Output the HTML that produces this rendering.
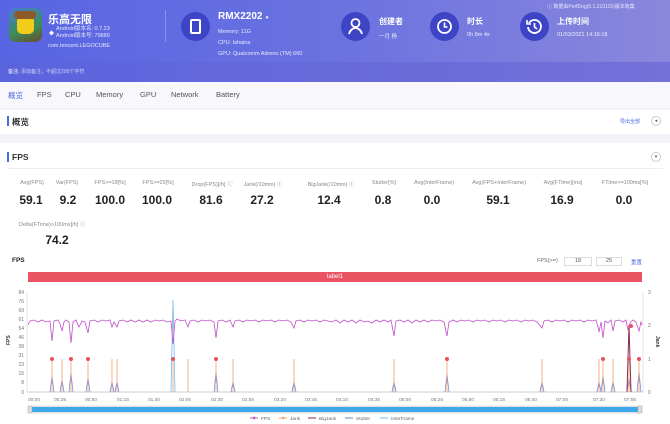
<!DOCTYPE html>
<html><head><meta charset="utf-8"><style>
*{margin:0;padding:0;box-sizing:border-box}
body{width:670px;height:424px;overflow:hidden;background:#f2f3f8;font-family:"Liberation Sans","Noto Sans CJK SC",sans-serif;position:relative;color:#333}
.a{position:absolute;white-space:nowrap}
.hdr{position:absolute;left:0;top:0;width:670px;height:82px;background:linear-gradient(90deg,#5865e3 0%,#6a72e0 50%,#8a87dc 100%)}
.band{position:absolute;left:0;top:62px;width:670px;height:20px;background:linear-gradient(90deg,#5a63de,#7471d8)}
.w{color:#fff}
.circ{position:absolute;width:29px;height:29px;border-radius:50%;background:#3d45c6}
.lbl{font-size:5.5px;color:#888;transform:translateX(-50%)}
.val{font-size:12px;font-weight:bold;color:#222;transform:translateX(-50%)}
</style></head><body>
<div class="hdr"></div><div class="band"></div>
<!-- app icon -->
<div class="a" style="left:9px;top:8px;width:33px;height:34px;border-radius:7px;background:linear-gradient(160deg,#4a7bd0,#3b8f5a 60%,#6b4a2c);overflow:hidden">
<div style="position:absolute;left:8px;top:8px;width:17px;height:18px;border-radius:5px;background:#f2cc1b"></div>
<div style="position:absolute;left:5px;top:3px;width:22px;height:8px;border-radius:4px;background:#8a5a2a"></div>
</div>
<div class="a w" style="left:48px;top:11px;font-size:11px;font-weight:bold">乐高无限</div>
<div class="a w" style="left:49px;top:30px;font-size:5px">◆</div>
<div class="a w" style="left:56px;top:26px;font-size:5.5px;opacity:.85;line-height:7px">Android版本名: 0.7.23<br>Android版本号: 79880</div>
<div class="a w" style="left:48px;top:43px;font-size:5.5px;opacity:.85">com.tencent.LEGOCUBE</div>
<div class="a" style="left:165px;top:10px;width:1px;height:32px;background:rgba(255,255,255,.25)"></div>
<div class="circ" style="left:181px;top:12px"><div style="position:absolute;left:9px;top:7px;width:11px;height:15px;border:2px solid #fff;border-radius:2px"></div></div>
<div class="a w" style="left:218px;top:11px;font-size:10px;font-weight:bold">RMX2202 <span style="font-size:6px;opacity:.8">●</span></div>
<div class="a w" style="left:218px;top:29px;font-size:5.5px;opacity:.85">Memory: 11G</div>
<div class="a w" style="left:218px;top:40px;font-size:5.5px;opacity:.85">CPU: lahaina</div>
<div class="a w" style="left:218px;top:51px;font-size:5.5px;opacity:.85">GPU: Qualcomm Adreno (TM) 660</div>
<div class="circ" style="left:341px;top:12px"><svg width="29" height="29" viewBox="0 0 29 29"><circle cx="14.5" cy="11" r="4" fill="none" stroke="#fff" stroke-width="1.8"/><path d="M8 22c1-4 4-6 6.5-6s5.5 2 6.5 6" fill="none" stroke="#fff" stroke-width="1.8"/></svg></div>
<div class="a w" style="left:379px;top:16px;font-size:8px;font-weight:bold">创建者</div>
<div class="a w" style="left:379px;top:32px;font-size:5.5px;opacity:.85">一月 杨</div>
<div class="circ" style="left:430px;top:12px"><svg width="29" height="29" viewBox="0 0 29 29"><circle cx="14.5" cy="14.5" r="6.5" fill="none" stroke="#fff" stroke-width="1.8"/><path d="M14.5 10.5v4.5h3" fill="none" stroke="#fff" stroke-width="1.6"/></svg></div>
<div class="a w" style="left:467px;top:16px;font-size:8px;font-weight:bold">时长</div>
<div class="a w" style="left:467px;top:32px;font-size:5.5px;opacity:.85">0h 8m 4s</div>
<div class="circ" style="left:520px;top:12px"><svg width="29" height="29" viewBox="0 0 29 29"><path d="M9 11a6.5 6.5 0 1 1-1 4" fill="none" stroke="#fff" stroke-width="1.8"/><path d="M7 8v4h4" fill="none" stroke="#fff" stroke-width="1.6"/><path d="M14.5 11v4l2.5 2" fill="none" stroke="#fff" stroke-width="1.6"/></svg></div>
<div class="a w" style="left:557px;top:16px;font-size:8px;font-weight:bold">上传时间</div>
<div class="a w" style="left:557px;top:32px;font-size:5.5px;opacity:.85">01/03/2021 14:16:18</div>
<div class="a w" style="left:547px;top:3px;font-size:5px;opacity:.8">ⓘ 数据由PerfDog(5.1.210116)版本收集</div>
<div class="a w" style="left:8px;top:68px;font-size:5px;opacity:.7"><b>备注:</b> 添加备注，不超过200个字符</div>
<!-- tabs -->
<div class="a" style="left:0;top:82px;width:670px;height:26px;background:#f8f8fc"></div>
<div class="a" style="left:8px;top:90px;font-size:7.5px;color:#4a6ae0">概览</div>
<div class="a" style="left:37px;top:90px;font-size:7.5px;color:#555">FPS</div>
<div class="a" style="left:65px;top:90px;font-size:7.5px;color:#555">CPU</div>
<div class="a" style="left:96px;top:90px;font-size:7.5px;color:#555">Memory</div>
<div class="a" style="left:140px;top:90px;font-size:7.5px;color:#555">GPU</div>
<div class="a" style="left:171px;top:90px;font-size:7.5px;color:#555">Network</div>
<div class="a" style="left:216px;top:90px;font-size:7.5px;color:#555">Battery</div>
<!-- overview card -->
<div class="a" style="left:0;top:110px;width:670px;height:24px;background:#fff"></div>
<div class="a" style="left:7px;top:116px;width:2px;height:10px;background:#4a6ae0"></div>
<div class="a" style="left:12px;top:116px;font-size:8.5px;font-weight:bold;color:#333">概览</div>
<div class="a" style="left:620px;top:118px;font-size:5px;color:#4a6ae0">导出全部</div>
<div class="a" style="left:651px;top:116px;width:10px;height:10px;border-radius:50%;border:1px solid #ccc;font-size:5px;text-align:center;line-height:8px;color:#555">◂</div>
<!-- FPS card -->
<div class="a" style="left:0;top:143px;width:670px;height:281px;background:#fff"></div>
<div class="a" style="left:7px;top:152px;width:2px;height:10px;background:#4a6ae0"></div>
<div class="a" style="left:12px;top:152px;font-size:8.5px;font-weight:bold;color:#333">FPS</div>
<div class="a" style="left:651px;top:152px;width:10px;height:10px;border-radius:50%;border:1px solid #ccc;font-size:5px;text-align:center;line-height:8px;color:#555">▾</div>
<div class="a" style="left:7px;top:168px;width:656px;height:1px;background:#eee"></div>
<div class="a lbl" style="left:32px;top:180px">Avg(FPS)</div><div class="a val" style="left:31px;top:193px">59.1</div>
<div class="a lbl" style="left:67px;top:180px">Var(FPS)</div><div class="a val" style="left:68px;top:193px">9.2</div>
<div class="a lbl" style="left:110px;top:180px">FPS&gt;=18[%]</div><div class="a val" style="left:110px;top:193px">100.0</div>
<div class="a lbl" style="left:158px;top:180px">FPS&gt;=25[%]</div><div class="a val" style="left:157px;top:193px">100.0</div>
<div class="a lbl" style="left:212px;top:180px">Drop(FPS)[/h] ⓘ</div><div class="a val" style="left:211px;top:193px">81.6</div>
<div class="a lbl" style="left:263px;top:180px">Jank(/10min) ⓘ</div><div class="a val" style="left:262px;top:193px">27.2</div>
<div class="a lbl" style="left:331px;top:180px">BigJank(/10min) ⓘ</div><div class="a val" style="left:329px;top:193px">12.4</div>
<div class="a lbl" style="left:384px;top:180px">Stutter[%]</div><div class="a val" style="left:383px;top:193px">0.8</div>
<div class="a lbl" style="left:434px;top:180px">Avg(InterFrame)</div><div class="a val" style="left:432px;top:193px">0.0</div>
<div class="a lbl" style="left:499px;top:180px">Avg(FPS+InterFrame)</div><div class="a val" style="left:498px;top:193px">59.1</div>
<div class="a lbl" style="left:563px;top:180px">Avg(FTime)[ms]</div><div class="a val" style="left:562px;top:193px">16.9</div>
<div class="a lbl" style="left:625px;top:180px">FTime&gt;=100ms[%]</div><div class="a val" style="left:624px;top:193px">0.0</div>
<div class="a" style="left:19px;top:220px;font-size:5.5px;color:#888">Delta(FTime)&gt;100ms[/h] ⓘ</div>
<div class="a val" style="left:57px;top:233px">74.2</div>
<!-- chart header -->
<div class="a" style="left:12px;top:257px;font-size:6.5px;font-weight:bold;color:#222">FPS</div>
<div class="a" style="left:537px;top:258px;font-size:5.5px;color:#666">FPS(&gt;=)</div>
<div class="a" style="left:564px;top:257px;width:28px;height:9px;border:1px solid #ddd;font-size:5.5px;text-align:center;line-height:7px;color:#555">18</div>
<div class="a" style="left:596px;top:257px;width:26px;height:9px;border:1px solid #ddd;font-size:5.5px;text-align:center;line-height:7px;color:#555">25</div>
<div class="a" style="left:631px;top:258px;font-size:5.5px;color:#4a6ae0">重置</div>
<div class="a" style="left:28px;top:272px;width:614px;height:10px;background:#ea5362;color:#fff;font-size:6px;text-align:center;line-height:10px">label1</div>
<svg class="a" style="left:0;top:284px" width="670" height="140" viewBox="0 284 670 140">
<g font-size="5" fill="#777" font-family="Liberation Sans">
<text x="24" y="294" text-anchor="end">84</text><text x="24" y="303" text-anchor="end">76</text><text x="24" y="312" text-anchor="end">69</text><text x="24" y="321" text-anchor="end">61</text><text x="24" y="330" text-anchor="end">54</text><text x="24" y="339" text-anchor="end">46</text><text x="24" y="348" text-anchor="end">38</text><text x="24" y="357" text-anchor="end">31</text><text x="24" y="366" text-anchor="end">23</text><text x="24" y="375" text-anchor="end">15</text><text x="24" y="384" text-anchor="end">8</text><text x="24" y="394" text-anchor="end">0</text>
<text x="648" y="294">3</text><text x="648" y="327">2</text><text x="648" y="361">1</text><text x="648" y="394">0</text>
<text x="10" y="345" transform="rotate(-90 10 345)" font-weight="bold" fill="#333">FPS</text>
<text x="656" y="336" transform="rotate(90 656 336)" font-weight="bold" fill="#333">Jank</text>
</g>
<line x1="27" y1="292" x2="27" y2="392" stroke="#ccc" stroke-width=".5"/>
<line x1="643" y1="292" x2="643" y2="392" stroke="#ccc" stroke-width=".5"/>
<line x1="27" y1="392" x2="643" y2="392" stroke="#999" stroke-width=".6"/>
<g font-size="4.8" fill="#777" text-anchor="middle" font-family="Liberation Sans">
<text x="34" y="401">00:00</text><text x="60" y="401">00:25</text><text x="91" y="401">00:50</text><text x="123" y="401">01:15</text><text x="154" y="401">01:40</text><text x="185" y="401">02:05</text><text x="217" y="401">02:30</text><text x="248" y="401">02:55</text><text x="280" y="401">03:20</text><text x="311" y="401">03:45</text><text x="342" y="401">04:10</text><text x="374" y="401">04:35</text><text x="405" y="401">05:00</text><text x="437" y="401">05:25</text><text x="468" y="401">05:50</text><text x="499" y="401">06:15</text><text x="531" y="401">06:40</text><text x="562" y="401">07:05</text><text x="599" y="401">07:30</text><text x="630" y="401">07:55</text>
</g>
<!-- stutter bumps -->
<g fill="none" stroke="#6a7fd8" stroke-width=".7">
<path d="M50 392L52 376L54 392M60 392L62 380L64 392M69 392L71 373L73 392M86 392L88 378L90 392M110 392L112 382L114 392M115 392L117 382L119 392M214 392L216 372L218 392M231 392L233 382L235 392M292 392L294 382L296 392M392 392L394 382L396 392M445 392L447 374L449 392M540 392L542 382L544 392M597 392L599 382L601 392M601 392L603 376L605 392M611 392L613 382L615 392M627 392L629 378L631 392M637 392L639 372L641 392"/>
</g>
<path d="M171 392L173 300L175 392" fill="none" stroke="#7ab8e8" stroke-width=".8"/>
<path d="M627 392L629 325L631 392" fill="none" stroke="#8a2a4a" stroke-width="1"/>
<!-- jank lines -->
<g stroke="#f4a06a" stroke-width=".8">
<line x1="52" y1="359" x2="52" y2="392"/><line x1="62" y1="359" x2="62" y2="392"/><line x1="71" y1="359" x2="71" y2="392"/><line x1="88" y1="359" x2="88" y2="392"/><line x1="112" y1="359" x2="112" y2="392"/><line x1="117" y1="359" x2="117" y2="392"/><line x1="173" y1="359" x2="173" y2="392"/><line x1="188" y1="359" x2="188" y2="392"/><line x1="216" y1="359" x2="216" y2="392"/><line x1="233" y1="359" x2="233" y2="392"/><line x1="294" y1="359" x2="294" y2="392"/><line x1="394" y1="359" x2="394" y2="392"/><line x1="447" y1="359" x2="447" y2="392"/><line x1="542" y1="359" x2="542" y2="392"/><line x1="599" y1="359" x2="599" y2="392"/><line x1="603" y1="359" x2="603" y2="392"/><line x1="613" y1="359" x2="613" y2="392"/><line x1="629" y1="359" x2="629" y2="392"/><line x1="639" y1="359" x2="639" y2="392"/>
</g>
<g fill="#e8505e"><circle cx="52" cy="359" r="2"/><circle cx="71" cy="359" r="2"/><circle cx="88" cy="359" r="2"/><circle cx="173" cy="359" r="2"/><circle cx="216" cy="359" r="2"/><circle cx="447" cy="359" r="2"/><circle cx="603" cy="359" r="2"/><circle cx="629" cy="359" r="2"/><circle cx="639" cy="359" r="2"/><circle cx="631" cy="326" r="2"/></g>
<!-- fps line -->
<polyline fill="none" stroke="#c050c8" stroke-width=".8" points="28,325 30,321 34,320 38,322 42,320 46,322 50,321 52,341 54,321 58,320 60,324 62,331 64,322 66,320 69,322 71,343 73,322 76,320 79,327 82,321 85,322 88,333 90,321 94,320 98,322 102,320 106,321 110,320 112,327 114,322 117,327 119,321 123,320 127,322 131,320 135,322 139,320 143,322 147,320 151,322 155,320 159,321 163,320 167,322 171,321 173,344 175,321 177,319 181,321 185,320 188,327 190,321 194,320 198,322 202,320 206,321 210,320 214,322 216,338 218,321 222,320 226,322 230,320 233,327 235,321 239,320 243,322 247,320 251,321 255,320 259,322 263,320 267,321 271,320 275,322 279,320 283,321 287,320 291,322 294,328 296,321 300,320 304,322 308,320 312,321 316,320 320,322 324,320 328,321 332,322 336,320 340,323 344,320 348,322 352,320 356,323 360,320 364,322 368,321 372,323 376,320 380,322 384,320 388,322 391,320 394,336 396,321 400,320 404,322 408,320 412,323 416,320 420,322 424,320 428,322 432,320 436,321 440,320 444,322 447,336 449,322 453,320 457,322 461,320 465,321 469,320 473,322 477,320 481,321 485,320 489,322 493,320 497,321 501,320 505,322 509,320 513,321 517,320 521,322 525,320 529,321 533,320 537,322 542,328 544,321 548,320 552,322 556,320 560,321 564,320 568,322 572,320 576,321 580,320 584,322 588,320 592,321 596,320 598,327 599,332 601,322 603,338 605,321 608,323 611,320 613,331 615,321 619,320 623,322 626,320 628,330 630,323 633,320 636,322 639,331 641,322 642,325"/>
<!-- slider -->
<rect x="28" y="406" width="614" height="7" rx="2" fill="#e8e8e8" stroke="#ccc" stroke-width=".5"/>
<rect x="32" y="407" width="606" height="5" fill="#3ca8ea"/>
<rect x="28" y="406" width="4" height="7" fill="#ddd" stroke="#aaa" stroke-width=".5"/>
<rect x="638" y="406" width="4" height="7" fill="#ddd" stroke="#aaa" stroke-width=".5"/>
<!-- legend -->
<g font-size="4.8" fill="#666" font-family="Liberation Sans">
<line x1="250" y1="418" x2="258" y2="418" stroke="#c050c8"/><circle cx="254" cy="418" r="1.2" fill="#c050c8"/><text x="261" y="420">FPS</text>
<line x1="279" y1="418" x2="287" y2="418" stroke="#f4a06a"/><circle cx="283" cy="418" r="1.2" fill="#f4a06a"/><text x="290" y="420">Jank</text>
<line x1="308" y1="418" x2="316" y2="418" stroke="#8a2a4a"/><text x="319" y="420">BigJank</text>
<line x1="345" y1="418" x2="353" y2="418" stroke="#6a7fd8"/><text x="356" y="420">Stutter</text>
<line x1="380" y1="418" x2="388" y2="418" stroke="#7ab8e8"/><text x="391" y="420">InterFrame</text>
</g>
</svg>
</body></html>
